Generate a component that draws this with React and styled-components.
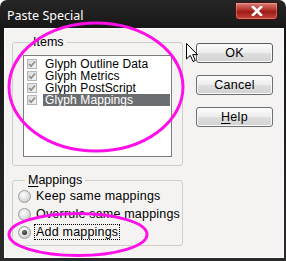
import React from "react";
import styled, { createGlobalStyle } from "styled-components";

const Global = createGlobalStyle`
  html, body { margin: 0; padding: 0; background: #ffffff; }
  * { box-sizing: border-box; }
`;

const FONT = `"Liberation Sans", Arial, sans-serif`;

const Window = styled.div`
  position: relative;
  width: 286px;
  height: 261px;
  background: linear-gradient(#262626, #161616 30px, #2a2a2a);
  border-radius: 7px 7px 0 0;
  display: flex;
  flex-direction: column;
  overflow: hidden;
  font-family: ${FONT};
  font-size: 12.5px;
  color: #000;
`;

const TitleBar = styled.div`
  height: 28px;
  flex: none;
  display: flex;
  align-items: flex-start;
  padding-left: 7px;
`;

const Title = styled.div`
  font-family: "Noto Sans", "Liberation Sans", sans-serif;
  font-size: 12.5px;
  line-height: 16px;
  margin-top: 8px;
  color: #ffffff;
`;

const CloseButton = styled.div`
  margin-left: auto;
  margin-right: 8px;
  margin-top: 2px;
  width: 43px;
  height: 18px;
  border: 1px solid #4a1010;
  border-radius: 0 0 4px 4px;
  background: linear-gradient(#d9807a 0%, #b8372f 40%, #9c1c16 55%, #c9463c 100%);
  box-shadow: inset 0 0 0 1px rgba(255, 200, 190, 0.35);
  display: flex;
  align-items: center;
  justify-content: center;
`;

const Body = styled.div`
  flex: 1;
  margin: 0 2px 3px 4px;
  background: #f4f3f2;
  border: 1px solid #fbfbfb;
  display: flex;
  gap: 13px;
  padding: 6px 0 0 7px;
`;

const LeftColumn = styled.div`
  width: 171px;
  display: flex;
  flex-direction: column;
`;

const Group = styled.fieldset`
  margin: ${(p) => (p.$first ? "0" : "7px 0 0 0")};
  border: 1px solid #cfcfc8;
  border-radius: 3px;
  padding: ${(p) => p.$pad};
  min-width: 0;
`;

const Legend = styled.legend`
  padding: 0 3px;
  margin-left: 7px;
  line-height: 14px;
  font-size: 12.5px;
`;

const Mnemonic = styled.span`
  text-decoration: underline;
  text-underline-offset: 2px;
`;

const ListBox = styled.div`
  height: 102px;
  background: #ffffff;
  border: 1px solid #7c7c7c;
  padding: 2px 1px 0 3px;
  display: flex;
  flex-direction: column;
`;

const ListRow = styled.div`
  height: 12px;
  display: flex;
  align-items: center;
  gap: 6px;
`;

const CheckBox = styled.div`
  width: 10px;
  height: 10px;
  flex: none;
  border: 1px solid #b5b5b5;
  background: linear-gradient(135deg, #dcdcdc, #f2f2f2);
  display: flex;
  align-items: center;
  justify-content: center;
`;

const ItemLabel = styled.div`
  flex: 1;
  height: 12px;
  line-height: 12px;
  font-size: 12px;
  padding-left: 2px;
  letter-spacing: 0.1px;
  white-space: nowrap;
  background: ${(p) => (p.$selected ? "#6b6e71" : "transparent")};
  color: ${(p) => (p.$selected ? "#ffffff" : "#000000")};
`;

const RadioRow = styled.div`
  height: 18px;
  display: flex;
  align-items: center;
  gap: 4px;
  white-space: nowrap;
`;

const Radio = styled.div`
  width: 13px;
  height: 13px;
  flex: none;
  border-radius: 50%;
  border: 1px solid #9a9a9a;
  background: radial-gradient(circle at 40% 35%, #ffffff, #d4d4d4 70%, #bdbdbd);
  display: flex;
  align-items: center;
  justify-content: center;
`;

const RadioDot = styled.div`
  width: 5px;
  height: 5px;
  border-radius: 50%;
  background: radial-gradient(circle at 40% 35%, #777, #111);
`;

const RadioLabel = styled.span`
  line-height: 14px;
  letter-spacing: 0.2px;
  padding: 0 1px;
  outline: ${(p) => (p.$focused ? "1px dotted #000" : "none")};
  outline-offset: 0;
`;

const RightColumn = styled.div`
  padding-top: 8px;
  display: flex;
  flex-direction: column;
  gap: 12px;
`;

const Button = styled.div`
  width: 77px;
  height: 20px;
  border: 1px solid ${(p) => (p.$default ? "#5f5f5f" : "#707070")};
  border-radius: 3px;
  background: linear-gradient(#fdfdfd, #ececec 50%, #dedede 51%, #d2d2d2);
  box-shadow: inset 0 0 0 1px #f8f8f8;
  display: flex;
  align-items: center;
  justify-content: center;
  line-height: 14px;
  letter-spacing: 0.3px;
`;

const Overlay = styled.svg`
  position: absolute;
  left: 0;
  top: 0;
  pointer-events: none;
`;

const Cursor = styled.svg`
  position: absolute;
  left: 186px;
  top: 43px;
  pointer-events: none;
`;

const items = [
  "Glyph Outline Data",
  "Glyph Metrics",
  "Glyph PostScript",
  "Glyph Mappings",
];

const Check = () => (
  <svg width="8" height="8" viewBox="0 0 8 8">
    <path d="M1 4 L3 6.2 L7 1.5" fill="none" stroke="#8a8a8a" strokeWidth="1.6" />
  </svg>
);

export default function App() {
  return (
    <>
      <Global />
      <Window>
        <TitleBar>
          <Title>Paste Special</Title>
          <CloseButton>
            <svg width="12" height="10" viewBox="0 0 12 10">
              <path d="M2 1 L10 9 M10 1 L2 9" stroke="#ffffff" strokeWidth="2.6" strokeLinecap="square" />
            </svg>
          </CloseButton>
        </TitleBar>
        <Body>
          <LeftColumn>
            <Group $first $pad="6px 10px 8px 10px">
              <Legend>Items</Legend>
              <ListBox>
                {items.map((t, i) => (
                  <ListRow key={t}>
                    <CheckBox>
                      <Check />
                    </CheckBox>
                    <ItemLabel $selected={i === 3}>{t}</ItemLabel>
                  </ListRow>
                ))}
              </ListBox>
            </Group>
            <Group $pad="0 4px 4px 5px">
              <Legend>
                <Mnemonic>M</Mnemonic>appings
              </Legend>
              <RadioRow>
                <Radio />
                <RadioLabel>Keep same mappings</RadioLabel>
              </RadioRow>
              <RadioRow>
                <Radio />
                <RadioLabel>Overrule same mappings</RadioLabel>
              </RadioRow>
              <RadioRow>
                <Radio>
                  <RadioDot />
                </Radio>
                <RadioLabel $focused>Add mappings</RadioLabel>
              </RadioRow>
            </Group>
          </LeftColumn>
          <RightColumn>
            <Button $default>OK</Button>
            <Button>Cancel</Button>
            <Button>
              <span>
                <Mnemonic>H</Mnemonic>elp
              </span>
            </Button>
          </RightColumn>
        </Body>
        <Overlay width="286" height="261" viewBox="0 0 286 261">
          <ellipse cx="96" cy="87" rx="87" ry="64" fill="none" stroke="#ff10e8" strokeWidth="3" />
          <ellipse cx="78" cy="234.5" rx="69" ry="21" fill="none" stroke="#ff10e8" strokeWidth="3" />
        </Overlay>
        <Cursor width="13" height="20" viewBox="0 0 13 20">
          <path d="M0.5 0.5 L0.5 16 L4.3 12.4 L7 18.5 L9.3 17.5 L6.7 11.6 L11.5 11.6 Z" fill="#ffffff" stroke="#000000" strokeWidth="1" />
        </Cursor>
      </Window>
    </>
  );
}
